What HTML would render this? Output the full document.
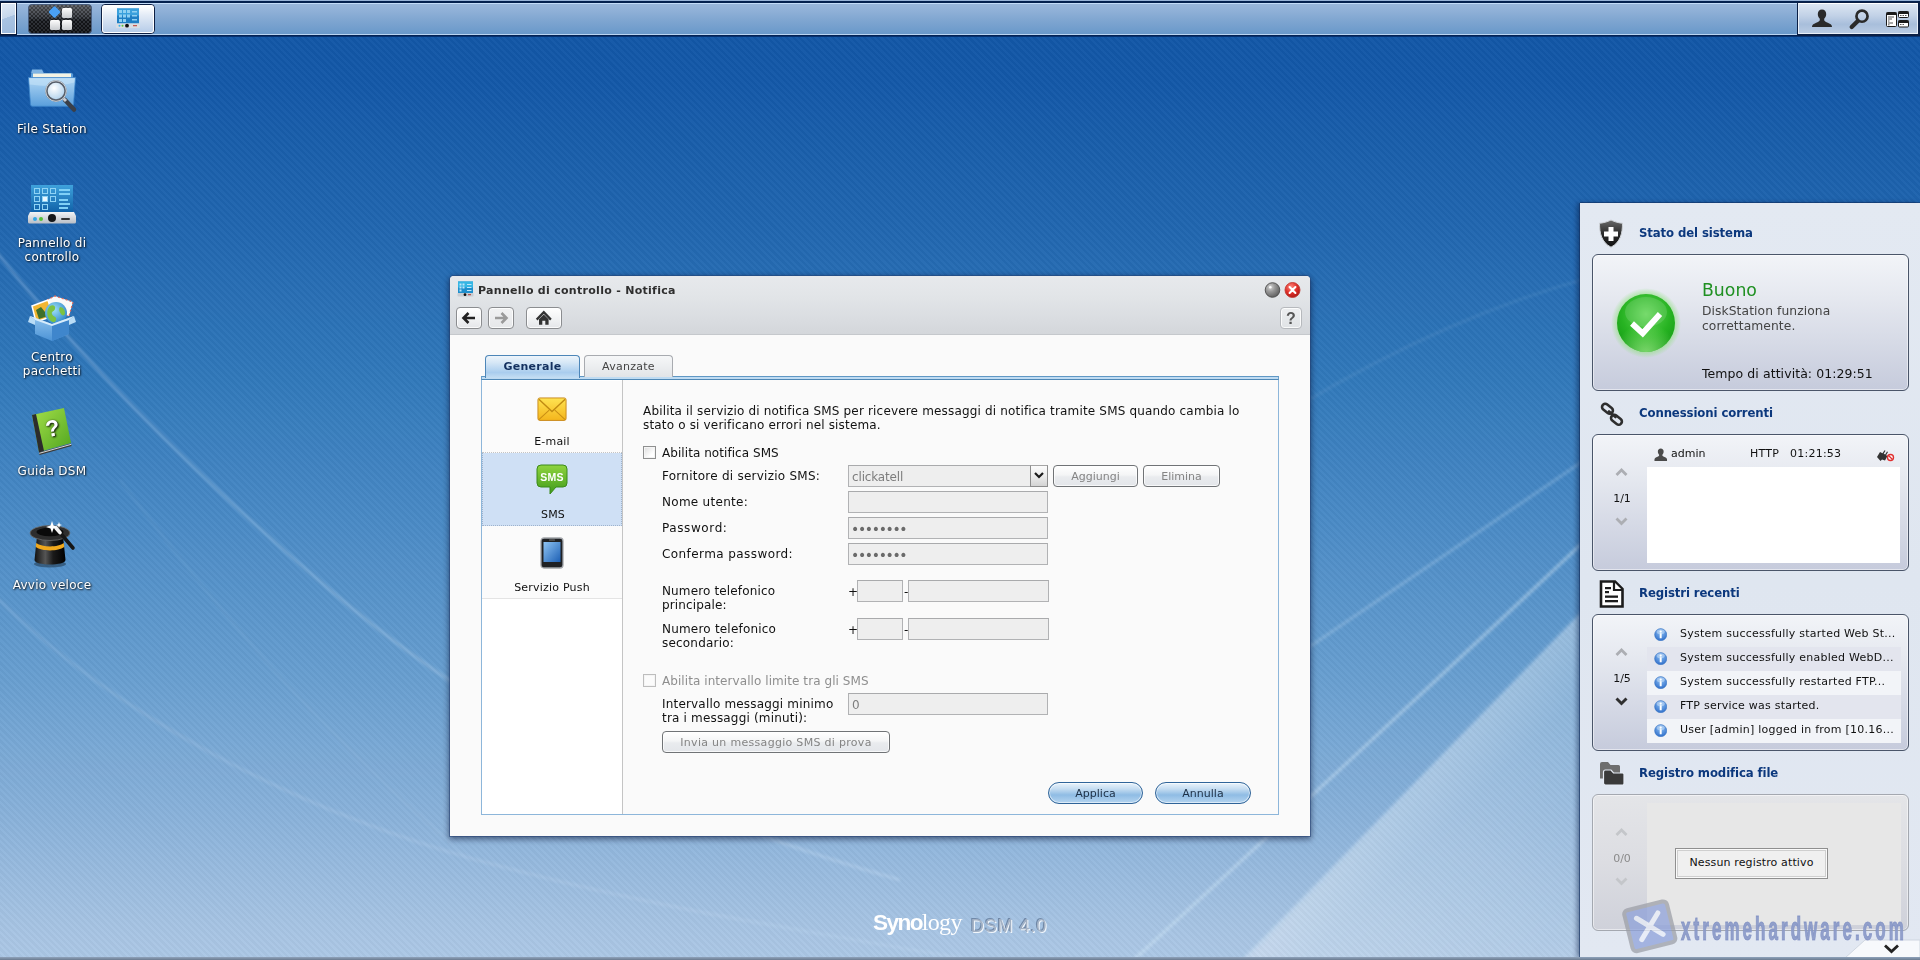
<!DOCTYPE html>
<html lang="it">
<head>
<meta charset="utf-8">
<title>Synology DiskStation - DSM 4.0</title>
<style>
*{box-sizing:border-box;margin:0;padding:0}
html,body{width:1920px;height:960px;overflow:hidden}
body{font-family:"DejaVu Sans","Liberation Sans",sans-serif;font-size:12px;color:#111;position:relative;
background:#165aa8}
#bg{position:absolute;left:0;top:0;width:1920px;height:960px;
background:linear-gradient(180deg,#1257a6 0px,#1459a8 80px,#2066b0 220px,#3279bb 380px,#4a8bc6 520px,#699fd0 680px,#8bb3db 820px,#a5c3e3 920px,#adc8e6 960px)}
#stripes{position:absolute;left:0;top:0;width:1920px;height:960px;
background:repeating-linear-gradient(45deg,rgba(255,255,255,0.022) 0,rgba(255,255,255,0.022) 2.300px,rgba(0,0,0,0.022) 2.300px,rgba(0,0,0,0.022) 4.600px)}
.abs{position:absolute}
/* taskbar */
#taskbar{position:absolute;left:0;top:0;width:1920px;height:37px;background:linear-gradient(180deg,#04214e 0,#04214e 35px,#02245a 36px,#0b3f88 37px)}
#taskbar .bar{position:absolute;left:0;top:3px;width:1920px;height:32px;
background:linear-gradient(180deg,#c3dcf8 0,#c3dcf8 1px,#98b6da 1.500px,#8fb0d7 8px,#7ea5d0 18px,#6a99ca 30.500px,#b9d4f2 31px,#b9d4f2 32px)}
#taskbar .topline{position:absolute;left:0;top:0;width:1920px;height:1px;background:#97b3d7}

/* taskbar buttons */
.tb-show{position:absolute;left:0;top:2px;width:17px;height:33px;background:#0a1a3a}
.tb-show i{position:absolute;left:1px;top:1px;width:15px;height:31px;border:1px solid #fff;background:linear-gradient(160deg,#dfe9f5 0,#c6d7ec 45%,#a9c3e2 46%,#9dbadd 100%)}
.tb-menu{position:absolute;left:28px;top:4px;width:64px;height:30px;border-radius:4px;border:1px solid #4a5f7f;background:#1c1f24;
background-image:linear-gradient(180deg,rgba(255,255,255,0.22) 0,rgba(255,255,255,0.05) 45%,rgba(0,0,0,0.2) 55%,rgba(0,0,0,0.35) 100%),
repeating-conic-gradient(#3b3f46 0 25%,#17191d 0 50%);background-size:auto,4px 4px}
.tb-task{position:absolute;left:101px;top:4px;width:54px;height:30px;border-radius:4px;border:1px solid #0c1f44;background:#fff;padding:0}
.tb-task i{display:block;width:100%;height:100%;border-radius:3px;border:1px solid #fff;background:linear-gradient(180deg,#ffffff 0,#e3ebf6 35%,#b7cde9 100%)}
.tb-right{position:absolute;left:1797px;top:2px;width:123px;height:34px;background:#0a1f45}
.tb-right i{position:absolute;left:1px;top:1px;width:120px;height:31px;border:1px solid #e8eff8;border-top-color:#fff;background:linear-gradient(180deg,#dbe5f2 0,#c2d2e7 40%,#a8bedb 70%,#b9cbe3 100%)}
/* desktop icons */
.dicon{position:absolute;width:104px;left:0;text-align:center;color:#fff;font-size:12px;letter-spacing:0.28px;line-height:14px;text-shadow:1px 1px 2px rgba(0,0,0,0.85),0 0 2px rgba(0,0,0,0.5)}
.dicon svg{display:block;margin:0 auto}
.dicon span{display:block;position:absolute;left:0;width:104px;margin-top:1px}

/* window */
#win{position:absolute;left:450px;top:276px;width:860px;height:560px;background:#fafafa;border-radius:4px 4px 0 0;
box-shadow:0 0 0 1px rgba(40,70,120,0.55),0 2px 6px 1px rgba(0,10,40,0.55)}
#win .hdr{position:absolute;left:0;top:0;width:860px;height:59px;border-radius:4px 4px 0 0;border-bottom:1px solid #c5c8cc;
background:linear-gradient(180deg,#e7e9ec 0,#e2e5e8 20px,#dadde1 42px,#d4d7db 57px)}
#win .title{position:absolute;left:28px;top:7px;font-weight:bold;font-size:11px;line-height:16px;color:#2e2e2e;letter-spacing:0.29px;white-space:nowrap}
.nbtn{position:absolute;top:31px;height:22px;border:1px solid #8b8d90;border-radius:4px;background:linear-gradient(180deg,#ffffff 0,#f4f5f6 45%,#e4e6e9 100%);box-shadow:inset 0 0 0 1px rgba(255,255,255,0.8)}
.nbtn svg{position:absolute;left:0;top:0}
.tab{position:absolute;height:22px;font-size:11px;letter-spacing:0.26px;line-height:20px;text-align:center;white-space:nowrap}
.tab.on{left:35px;top:79px;width:95px;height:23px;border:1px solid #4d86b8;border-bottom:none;border-radius:4px 4px 0 0;font-weight:bold;color:#14305e;
background:linear-gradient(180deg,#eef5fb 0,#d6e7f6 30%,#a9cdee 75%,#c4def3 100%);line-height:21px}
.tab.off{left:134px;top:79px;width:89px;height:22px;border:1px solid #a8abb0;border-bottom:none;border-radius:4px 4px 0 0;color:#444;
background:linear-gradient(180deg,#f6f7f8 0,#eceef0 50%,#e2e4e7 100%);line-height:21px}
#tabstrip{position:absolute;left:31px;top:100px;width:798px;height:4px;background:#bfdbf2;border-top:1px solid #5f97c4;border-bottom:1px solid #4f88b6;border-left:1px solid #6aa0cc;border-right:1px solid #6aa0cc}
#panel{position:absolute;left:31px;top:104px;width:798px;height:435px;border:1px solid #8db6da;border-top:none;background:#fafafa}
#lnav{position:absolute;left:0;top:0;width:141px;height:434px;background:#fff;border-right:1px solid #c4c4c4}
.litem{position:absolute;left:0;width:140px;height:73px;text-align:center;font-size:11px;letter-spacing:0.2px;border-bottom:1px dotted #c4c4c4;background:#fbfbfb}
.litem span{position:absolute;left:0;width:140px;top:54px;line-height:14px;color:#111}
.litem svg{position:absolute}
.litem.sel{background:#cfe0f5;border-bottom:1px dotted #9fb3cc;border-left:1px dotted #9fb3cc;border-right:1px dotted #9fb3cc}
.t{position:absolute;white-space:nowrap;font-size:12px;line-height:14px;color:#111;margin-top:1px}
.f{position:absolute;height:22px;border:1px solid #b1b2b4;border-top-color:#a9aaac;background:#eeeeee;font-size:12px;letter-spacing:-0.15px;line-height:20px;color:#7d7d7d;padding-left:3px;padding-top:1px;white-space:nowrap;overflow:hidden}
.gbtn{position:absolute;height:22px;border:1px solid #707376;border-radius:4px;background:linear-gradient(180deg,#ffffff 0,#f4f5f6 45%,#e9ebee 55%,#e3e6ea 100%);color:#848484;font-size:11px;line-height:22px;text-align:center;white-space:nowrap;box-shadow:inset 0 0 0 1px rgba(255,255,255,0.7)}
.bbtn{position:absolute;height:22px;border:1px solid #2f6499;border-radius:11px;color:#1c2f45;font-size:11px;line-height:22px;text-align:center;
background:linear-gradient(180deg,#eaf3fb 0,#c4dcf1 30%,#8fbce4 60%,#b5d5f0 100%);box-shadow:inset 0 0 0 1px rgba(255,255,255,0.55)}
.cb{position:absolute;width:13px;height:13px;border:1px solid #8e8f8f;background:linear-gradient(135deg,#dcdcdc 0,#ffffff 70%);box-shadow:inset 0 0 0 1px #f4f4f4}

/* widgets */
#wp{position:absolute;left:1580px;top:203px;width:340px;height:755px;background:linear-gradient(180deg,#e3e9f2 0,#dfe6f0 50%,#e2e8f2 100%);box-shadow:-1px 0 0 rgba(20,50,100,0.6),-3px 0 5px rgba(0,20,60,0.45),0 -1px 0 rgba(20,50,100,0.5)}
.wt{position:absolute;left:59px;font-weight:bold;font-stretch:condensed;font-size:13px;line-height:16px;color:#0c387d;white-space:nowrap;letter-spacing:-0.1px;margin-top:1px}
.wbox{position:absolute;left:12px;width:317px;height:137px;border:1px solid #4a5569;border-radius:6px;
background:linear-gradient(180deg,#f2f4f8 0,#e6e9f0 30%,#d6dae6 65%,#c6cbdc 100%);box-shadow:inset 0 0 0 1px rgba(255,255,255,0.500)}
.wbox .in{position:absolute;left:54px;width:254px}
.wt2{position:absolute;white-space:nowrap;font-size:11px;letter-spacing:0.24px;line-height:14px;color:#111}
.row{position:absolute;left:54px;width:254px;height:24px}
.chev{position:absolute;left:22px}
.pg{position:absolute;left:9px;width:40px;text-align:center;font-size:11px;line-height:14px;color:#111}
</style>
</head>
<body>
<div id="bg"></div>
<svg id="streaks" class="abs" style="left:0;top:0" width="1920" height="960" viewBox="0 0 1920 960">
<defs><filter id="bl1" x="-5%" y="-5%" width="110%" height="110%"><feGaussianBlur stdDeviation="1.500"/></filter><filter id="bl2" x="-5%" y="-5%" width="110%" height="110%"><feGaussianBlur stdDeviation="2.500"/></filter>
<linearGradient id="wg" gradientUnits="userSpaceOnUse" x1="1420" y1="780" x2="1560" y2="925"><stop offset="0" stop-color="#fff" stop-opacity="0.340"/><stop offset="0.250" stop-color="#fff" stop-opacity="0.220"/><stop offset="1" stop-color="#fff" stop-opacity="0.100"/></linearGradient></defs>
<path d="M1238 966L1592 602V966z" fill="url(#wg)" filter="url(#bl2)"/>
<g fill="none" stroke="#d6eafb" filter="url(#bl1)">
<path d="M-5 250C90 370 200 480 330 590S620 800 900 880" stroke-width="2.600" opacity="0.330"/>
<path d="M-5 596C120 720 300 810 470 858S800 930 1000 965" stroke-width="2.200" opacity="0.230"/>
<path d="M120 480C240 640 330 740 470 860" stroke-width="1.600" opacity="0.120"/>
<path d="M1300 405Q1450 315 1592 277" stroke-width="2" opacity="0.130"/>
<path d="M1290 660Q1450 552 1592 455" stroke-width="2.600" opacity="0.300"/>
<path d="M1592 534Q1400 715 1125 968" stroke-width="3.200" opacity="0.450"/>
<path d="M1592 604L1240 964" stroke-width="3" opacity="0.250"/>
</g>
</svg>
<div id="stripes"></div>
<div id="taskbar"><div class="topline"></div><div class="bar"></div></div>

<div class="tb-show"><i></i></div>
<div class="tb-menu">
<svg width="62" height="28" viewBox="0 0 62 28" style="position:absolute;left:-1px;top:0">
<defs><linearGradient id="gsq" x1="0" y1="0" x2="0" y2="1"><stop offset="0" stop-color="#fdfdfd"/><stop offset="1" stop-color="#c9ccd0"/></linearGradient></defs>
<rect x="22" y="2.5" width="9" height="9" rx="1.5" transform="rotate(45 26.5 7)" fill="#4aa0f4"/>
<rect x="34" y="3" width="10" height="10" rx="1.5" fill="url(#gsq)"/>
<rect x="22" y="15" width="10" height="10" rx="1.5" fill="url(#gsq)"/>
<rect x="34" y="15" width="10" height="10" rx="1.5" fill="url(#gsq)"/>
</svg></div>
<div class="tb-task"><i></i>
<svg width="24" height="22" viewBox="0 0 24 22" style="position:absolute;left:14px;top:3px">
<rect x="1" y="0.5" width="22" height="15" fill="#1f7fc4"/><rect x="1" y="0.5" width="22" height="7" fill="#3aa0dc"/>
<g fill="#8fd0f2"><rect x="3" y="2" width="3" height="3"/><rect x="7" y="2" width="3" height="3"/><rect x="11" y="2" width="3" height="3"/><rect x="3" y="6.500" width="3" height="3"/><rect x="7" y="6.500" width="3" height="3"/><rect x="11" y="6.500" width="3" height="3"/><rect x="3" y="11" width="3" height="3"/><rect x="7" y="11" width="3" height="3"/><rect x="16" y="3" width="5" height="1.500"/><rect x="16" y="7" width="5" height="1.500"/><rect x="16" y="11" width="5" height="1.500"/></g>
<rect x="0" y="15.500" width="24" height="4.500" rx="1" fill="#d9dde2"/><circle cx="11" cy="17.700" r="1.900" fill="#111"/><circle cx="3.500" cy="17.700" r="1" fill="#3bb0e8"/><circle cx="6.500" cy="17.700" r="1" fill="#58c23a"/><rect x="17" y="17.200" width="4" height="1" fill="#c0392b"/>
</svg></div>
<div class="tb-right"><i></i>
<svg width="120" height="31" viewBox="0 0 120 31" style="position:absolute;left:1px;top:1px">
<g fill="#2a2a2a">
<path d="M24 6.500c2.600 0 4.200 2 4.200 4.600 0 1.900-.8 3.600-2 4.600v1.600c0 1.200 3 2.200 5.500 3.400 1.500.7 2.300 1.800 2.300 3.200H14c0-1.400.8-2.500 2.300-3.200 2.500-1.200 5.500-2.200 5.500-3.400v-1.600c-1.200-1-2-2.700-2-4.600 0-2.600 1.600-4.600 4.200-4.600z"/>
<path d="M64 6.300a6.900 6.900 0 1 0 0 13.800 6.900 6.900 0 0 0 0-13.800zm0 2.700a4.200 4.200 0 1 1 0 8.400 4.200 4.200 0 0 1 0-8.400z"/>
<path d="M58.600 16.200l3 3-6.400 6.200a2 2 0 0 1-3-3z"/>
</g>
<g>
<rect x="88.500" y="9.500" width="10" height="14" rx="1" fill="#fff" stroke="#1a1a1a"/><rect x="88.500" y="9.500" width="10" height="2.500" fill="#1a1a1a"/>
<rect x="100.500" y="8.500" width="10" height="6" rx="1" fill="#fff" stroke="#1a1a1a"/><rect x="100.500" y="8.500" width="10" height="2.500" fill="#1a1a1a"/>
<rect x="100.500" y="17.500" width="10" height="6.500" rx="1" fill="#fff" stroke="#1a1a1a"/><rect x="100.500" y="17.500" width="10" height="2.500" fill="#1a1a1a"/>
<g fill="#555"><rect x="90" y="13.500" width="6" height="1"/><rect x="90" y="15.500" width="4" height="1"/><rect x="90" y="17.500" width="1.500" height="1"/><rect x="90" y="19.500" width="5" height="1"/><rect x="90" y="21.300" width="1.500" height="1"/><rect x="102" y="12" width="1.500" height="1"/><rect x="104.500" y="12" width="1.500" height="1"/><rect x="107" y="12" width="1.500" height="1"/><rect x="102" y="21" width="1.500" height="1"/><rect x="104.500" y="21" width="1.500" height="1"/></g>
</g>
</svg></div>

<div class="dicon" style="top:64px;height:80px">
<svg width="52" height="50" viewBox="0 0 52 50">
<defs>
<linearGradient id="fs1" x1="0" y1="0" x2="0" y2="1"><stop offset="0" stop-color="#b3d8f5"/><stop offset="1" stop-color="#5a9fdc"/></linearGradient>
<radialGradient id="fs2" cx="0.4" cy="0.35" r="0.7"><stop offset="0" stop-color="#ffffff"/><stop offset="1" stop-color="#a9cdea"/></radialGradient>
</defs>
<path d="M6 5.500h10l2 4h-13z" fill="#7fb4e4"/>
<rect x="5" y="9" width="42" height="8" rx="1.500" fill="#5c9fdb"/>
<path d="M7 9.500h38v6h-38z" fill="#f4f3e4"/>
<path d="M2.500 13.500h47l-2 27a2 2 0 0 1-2 1.800h-39a2 2 0 0 1-2-1.800z" fill="url(#fs1)" stroke="#3d86cb" stroke-width="0.8"/>
<path d="M3.500 14.500h45l-.3 4c-14 4-30 4-44.500 2z" fill="#c4e2f8" opacity="0.6"/>
<path d="M39 36l9 9.500" stroke="#3a3f48" stroke-width="4.500" stroke-linecap="round"/>
<path d="M36 33l4 4" stroke="#c8ccd2" stroke-width="3"/>
<circle cx="30" cy="27" r="9.500" fill="url(#fs2)" stroke="#59606b" stroke-width="2.400"/>
<circle cx="30" cy="27" r="10.300" fill="none" stroke="#e8edf2" stroke-width="0.8"/>
</svg>
<span style="top:57px">File Station</span></div>

<div class="dicon" style="top:182px;height:90px">
<svg width="50" height="42" viewBox="0 0 50 42" style="margin-top:2px">
<defs><linearGradient id="cp1" x1="0" y1="0" x2="0" y2="1"><stop offset="0" stop-color="#3fa2dc"/><stop offset="1" stop-color="#0e5fa6"/></linearGradient>
<linearGradient id="cp2" x1="0" y1="0" x2="0" y2="1"><stop offset="0" stop-color="#f3f4f6"/><stop offset="1" stop-color="#b9bec6"/></linearGradient></defs>
<rect x="4" y="1" width="42" height="28" fill="url(#cp1)"/>
<g fill="none" stroke="#8fd3f5" stroke-width="1"><rect x="7.500" y="4.500" width="5" height="5"/><rect x="15.500" y="4.500" width="5" height="5"/><rect x="23.500" y="4.500" width="5" height="5"/><rect x="7.500" y="12.500" width="5" height="5"/><rect x="15.500" y="12.500" width="5" height="5" fill="#e8f6ff"/><rect x="23.500" y="12.500" width="5" height="5"/><rect x="7.500" y="20.500" width="5" height="5"/><rect x="15.500" y="20.500" width="5" height="5"/></g>
<g fill="#7fd0f6"><rect x="32" y="5" width="11" height="2"/><rect x="32" y="9" width="11" height="2"/><rect x="32" y="15" width="9" height="2"/><rect x="32" y="19" width="11" height="2"/><rect x="32" y="23" width="9" height="2"/></g>
<path d="M3 28h44l2 4v6a1.500 1.500 0 0 1-1.500 1.500h-45a1.500 1.500 0 0 1-1.500-1.500v-6z" fill="url(#cp2)"/>
<circle cx="25" cy="34" r="4" fill="#15171a"/><circle cx="8" cy="35" r="2" fill="#35a6e4"/><circle cx="14" cy="35" r="2" fill="#55c13a"/><rect x="34" y="34" width="9" height="2" rx="1" fill="#333"/>
</svg>
<span style="top:53px">Pannello di<br>controllo</span></div>

<div class="dicon" style="top:294px;height:90px">
<svg width="50" height="48" viewBox="0 0 50 48">
<defs><linearGradient id="pk1" x1="0" y1="0" x2="0" y2="1"><stop offset="0" stop-color="#8fc3ee"/><stop offset="1" stop-color="#4c93d6"/></linearGradient>
<radialGradient id="pk2" cx="0.4" cy="0.35" r="0.7"><stop offset="0" stop-color="#9fe0f7"/><stop offset="1" stop-color="#2a84c9"/></radialGradient></defs>
<path d="M20 6l8-4 18 6-4 14-20-4z" fill="#fafafa" stroke="#e26a5a" stroke-width="1.200" stroke-dasharray="2 2"/>
<path d="M5 12l16-6 5 16-17 6z" fill="#f2b632" stroke="#fff" stroke-width="1.500"/>
<path d="M9 16l5-3 4 5 3-2 3 5-12 4z" fill="#3f6f2a"/>
<circle cx="29" cy="19" r="11" fill="url(#pk2)"/>
<path d="M23 12c3-2 6 0 5 3s-4 2-3 5 5 2 4 6-5 2-7-1-3-9 1-13zM33 13c3 0 5 3 5 6s-3 3-4 1-3-4-1-7z" fill="#7cc243"/>
<path d="M3 22l22 8 22-8-5 4v14l-17 7-17-7v-14z" fill="url(#pk1)"/>
<path d="M25 30v17l17-7v-14z" fill="#3f86cc"/>
<path d="M3 22l5 4 17 6v-2zM47 22l-5 4-17 6v-2z" fill="#d8ecfb"/>
<path d="M3 22l-2 6 7 3v-5zM47 22l2 6-7 3v-5z" fill="#b9dcf6"/>
</svg>
<span style="top:55px">Centro<br>pacchetti</span></div>

<div class="dicon" style="top:406px;height:90px">
<svg width="46" height="50" viewBox="0 0 46 50">
<defs><linearGradient id="hb1" x1="0" y1="0" x2="1" y2="1"><stop offset="0" stop-color="#a6e04a"/><stop offset="1" stop-color="#4fa51f"/></linearGradient></defs>
<path d="M3 9l32-7 7 35-32 9z" fill="url(#hb1)"/>
<path d="M3 9l4-.9 8 37-5 1.400z" fill="#2c2c2c"/>
<path d="M10 46.500l32-9 .6 2.500-32 9z" fill="#3a3a3a"/>
<path d="M10.300 47.300l32-9" stroke="#e9e9e9" stroke-width="0.900"/>
<text x="24" y="30" font-family="Liberation Sans,sans-serif" font-weight="bold" font-size="23" fill="#fff" text-anchor="middle" transform="rotate(-10 25 24)">?</text>
</svg>
<span style="top:57px">Guida DSM</span></div>

<div class="dicon" style="top:520px;height:90px">
<svg width="52" height="48" viewBox="0 0 52 48">
<defs><linearGradient id="ht1" x1="0" y1="0" x2="1" y2="0"><stop offset="0" stop-color="#111"/><stop offset="0.350" stop-color="#555"/><stop offset="0.600" stop-color="#1a1a1a"/><stop offset="1" stop-color="#000"/></linearGradient></defs>
<ellipse cx="24" cy="44" rx="16" ry="3.500" fill="rgba(0,0,0,0.350)"/>
<path d="M11 16l-2.500 24c0 6 31 6 31 0l-2.500-24z" fill="url(#ht1)"/>
<path d="M10.200 23c6 4.500 22 4.500 27.600 0l.4 4c-6 4.500-22.400 4.500-28.400 0z" fill="#f0a81c"/>
<ellipse cx="24" cy="13" rx="20" ry="7.500" fill="#2d2d2d"/>
<ellipse cx="24" cy="12" rx="13.500" ry="4.200" fill="#0a0a0a"/>
<ellipse cx="24" cy="13" rx="20" ry="7.500" fill="none" stroke="#6a6a6a" stroke-width="0.800"/>
<path d="M30 8l17 20" stroke="#161616" stroke-width="3.600" stroke-linecap="round"/>
<path d="M30 8l4 4.700" stroke="#f4f4f4" stroke-width="3.600" stroke-linecap="round"/>
<path d="M26 1l1.500 4.500 4.500 1.500-4.500 1.500-1.500 4.500-1.500-4.500-4.500-1.500 4.500-1.500z" fill="#fff"/>
<path d="M33 2l.8 2.200 2.200.8-2.200.8-.8 2.200-.8-2.200-2.200-.8 2.200-.8z" fill="#fff"/>
</svg>
<span style="top:57px">Avvio veloce</span></div>

<div id="win">
<div class="hdr"></div>
<svg class="abs" style="left:7px;top:5px" width="17" height="17" viewBox="0 0 17 17">
<rect x="1" y="0.500" width="15" height="11.500" fill="#1f8fcd"/><rect x="1" y="0.500" width="15" height="6" fill="#35b6e4"/>
<g fill="#bfe6fa"><rect x="2.500" y="2.500" width="2" height="2"/><rect x="5.500" y="2.500" width="2" height="2"/><rect x="2.500" y="5.500" width="2" height="2"/><rect x="5.500" y="5.500" width="2" height="2"/><rect x="2.500" y="8.500" width="2" height="2"/><rect x="10" y="3" width="4.500" height="1"/><rect x="10" y="6" width="4.500" height="1"/><rect x="10" y="9" width="4.500" height="1"/></g>
<rect x="0.500" y="12" width="16" height="3.500" rx="0.800" fill="#c9cdd3"/><circle cx="8" cy="13.700" r="1.400" fill="#111"/><rect x="11" y="13.200" width="3" height="1" fill="#b03a2e"/>
</svg>
<div class="title">Pannello di controllo - Notifica</div>
<svg class="abs" style="left:813px;top:5px" width="40" height="18" viewBox="0 0 40 18">
<defs><radialGradient id="wb1" cx="0.35" cy="0.3" r="0.8"><stop offset="0" stop-color="#d5d5d5"/><stop offset="0.400" stop-color="#989898"/><stop offset="1" stop-color="#565656"/></radialGradient>
<radialGradient id="wb2" cx="0.4" cy="0.3" r="0.8"><stop offset="0" stop-color="#ff8a80"/><stop offset="0.5" stop-color="#e0302a"/><stop offset="1" stop-color="#9e1410"/></radialGradient></defs>
<circle cx="9.500" cy="9" r="7.300" fill="url(#wb1)" stroke="#4c4c4c" stroke-width="0.900"/><circle cx="7.300" cy="6.300" r="1.300" fill="#fff" opacity="0.900"/>
<circle cx="29.500" cy="9" r="7.500" fill="url(#wb2)" stroke="#c23a33" stroke-width="0.900"/>
<path d="M26.600 6.100l5.800 5.800M32.400 6.100l-5.800 5.800" stroke="#fff" stroke-width="2.100" stroke-linecap="round"/>
</svg>
<div class="nbtn" style="left:6px;width:26px"><svg width="24" height="20" viewBox="0 0 24 20"><path d="M18 10h-11M11.500 5l-5 5 5 5" fill="none" stroke="#222" stroke-width="2.600" stroke-linejoin="miter"/></svg></div>
<div class="nbtn" style="left:38px;width:26px;background:linear-gradient(180deg,#f1f2f3 0,#e6e8ea 100%)"><svg width="24" height="20" viewBox="0 0 24 20"><path d="M6 10h11M12.500 5l5 5-5 5" fill="none" stroke="#9a9a9a" stroke-width="2.600"/></svg></div>
<div class="nbtn" style="left:76px;width:36px"><svg width="34" height="20" viewBox="0 0 34 20"><path d="M9.700 11.600l7.100-7.400 7.100 7.400" fill="none" stroke="#333" stroke-width="2.300" stroke-linejoin="miter"/><path d="M12 11.300l4.800-4.900 4.800 4.900v5.500h-3.300v-4h-3v4h-3.300z" fill="#333"/></svg></div>
<div class="nbtn" style="left:830px;width:22px;border-color:#b6b9bd;background:linear-gradient(180deg,#eceef0 0,#e0e3e6 100%)"><span style="position:absolute;left:0;top:0;width:20px;text-align:center;font-family:'Liberation Sans',sans-serif;font-weight:bold;font-size:16px;line-height:21px;color:#555">?</span></div>

<div id="tabstrip"></div>
<div class="tab on">Generale</div>
<div class="tab off">Avanzate</div>
<div id="panel">
<div id="lnav">
 <div class="litem" style="top:1px;height:72px">
  <svg style="left:55px;top:16px" width="30" height="24.400" viewBox="0 0 32 26"><defs><linearGradient id="em1" x1="0" y1="0" x2="0" y2="1"><stop offset="0" stop-color="#ffe352"/><stop offset="1" stop-color="#f4b51c"/></linearGradient></defs>
  <rect x="1" y="1" width="30" height="24" rx="2" fill="url(#em1)" stroke="#c9871a" stroke-width="1"/><path d="M2 24l11-10M30 24l-11-10" stroke="#c98f14" stroke-width="1.100"/><path d="M2 2.500l14 13 14-13" fill="none" stroke="#c08a12" stroke-width="1.500"/></svg>
  <span>E-mail</span></div>
 <div class="litem sel" style="top:73px;height:73px">
  <svg style="left:53px;top:11px" width="32" height="32" viewBox="0 0 32 32"><defs><linearGradient id="sm1" x1="0" y1="0" x2="0" y2="1"><stop offset="0" stop-color="#8fd43f"/><stop offset="1" stop-color="#3f9a1a"/></linearGradient></defs>
  <path d="M5 1h22a4 4 0 0 1 4 4v14a4 4 0 0 1-4 4h-7l-6 7v-7h-9a4 4 0 0 1-4-4v-14a4 4 0 0 1 4-4z" fill="url(#sm1)" stroke="#3b8a1a" stroke-width="1"/>
  <text x="16" y="16.500" text-anchor="middle" font-family="Liberation Sans,sans-serif" font-weight="bold" font-size="10.500" fill="#fff">SMS</text></svg>
  <span style="top:55px">SMS</span></div>
 <div class="litem" style="top:146px;border-bottom:1px solid #e4e4e4">
  <svg style="left:58px;top:11px" width="24" height="32" viewBox="0 0 24 32"><defs><linearGradient id="ph1" x1="0" y1="0" x2="1" y2="1"><stop offset="0" stop-color="#8ec4f4"/><stop offset="1" stop-color="#1c5fb4"/></linearGradient></defs>
  <rect x="1" y="1" width="22" height="30" rx="3" fill="#1f2124" stroke="#a3a6ab" stroke-width="1.300"/><rect x="3.500" y="5" width="17" height="20" fill="url(#ph1)"/><rect x="9" y="2.600" width="6" height="1" rx="0.500" fill="#777"/></svg>
  <span style="top:55px">Servizio Push</span></div>
</div>
</div>

<div class="t" style="left:193px;top:127px;white-space:normal;width:620px;letter-spacing:0.17px">Abilita il servizio di notifica SMS per ricevere messaggi di notifica tramite SMS quando cambia lo<br>stato o si verificano errori nel sistema.</div>
<div class="cb" style="left:193px;top:170px"></div>
<div class="t" style="left:212px;top:169px;letter-spacing:0.06px">Abilita notifica SMS</div>
<div class="t" style="left:212px;top:192px;letter-spacing:0.25px">Fornitore di servizio SMS:</div>
<div class="f" style="left:398px;top:189px;width:200px">clickatell</div>
<div class="abs" style="left:580px;top:189px;width:18px;height:22px;border:1px solid #8d8d8d;border-top-color:#a5a5a5;background:linear-gradient(180deg,#fbfbfb 0,#ececec 50%,#d4d4d4 100%)"><svg width="16" height="20" viewBox="0 0 16 20" style="display:block"><path d="M4 7l4 4 4-4" fill="none" stroke="#1a1a1a" stroke-width="2.200"/></svg></div>
<div class="gbtn" style="left:603px;top:189px;width:85px">Aggiungi</div>
<div class="gbtn" style="left:693px;top:189px;width:77px">Elimina</div>
<div class="t" style="left:212px;top:218px;letter-spacing:0.28px">Nome utente:</div>
<div class="f" style="left:398px;top:215px;width:200px"></div>
<div class="t" style="left:212px;top:244px;letter-spacing:0.6px">Password:</div>
<div class="f" style="left:398px;top:241px;width:200px;font-size:14px;letter-spacing:-1.350px;padding-left:2px;padding-top:1px;color:#6a6a6a;line-height:20px">••••••••</div>
<div class="t" style="left:212px;top:270px;letter-spacing:0.42px">Conferma password:</div>
<div class="f" style="left:398px;top:267px;width:200px;font-size:14px;letter-spacing:-1.350px;padding-left:2px;padding-top:1px;color:#6a6a6a;line-height:20px">••••••••</div>
<div class="t" style="left:212px;top:307px;white-space:normal;width:150px;letter-spacing:0.14px">Numero telefonico principale:</div>
<div class="t" style="left:398px;top:308px">+</div>
<div class="f" style="left:407px;top:304px;width:46px"></div>
<div class="t" style="left:454px;top:308px">-</div>
<div class="f" style="left:458px;top:304px;width:141px"></div>
<div class="t" style="left:212px;top:345px;white-space:normal;width:150px;letter-spacing:0.2px">Numero telefonico secondario:</div>
<div class="t" style="left:398px;top:346px">+</div>
<div class="f" style="left:407px;top:342px;width:46px"></div>
<div class="t" style="left:454px;top:346px">-</div>
<div class="f" style="left:458px;top:342px;width:141px"></div>
<div class="cb" style="left:193px;top:398px;border-color:#bdbdbd;background:#fbfbfb"></div>
<div class="t" style="left:212px;top:397px;color:#8e8e8e;letter-spacing:0.07px">Abilita intervallo limite tra gli SMS</div>
<div class="t" style="left:212px;top:420px;white-space:normal;width:180px;letter-spacing:0.18px">Intervallo messaggi minimo<br>tra i messaggi (minuti):</div>
<div class="f" style="left:398px;top:417px;width:200px">0</div>
<div class="gbtn" style="left:212px;top:455px;width:228px;letter-spacing:0.3px">Invia un messaggio SMS di prova</div>
<div class="bbtn" style="left:598px;top:506px;width:95px">Applica</div>
<div class="bbtn" style="left:705px;top:506px;width:96px">Annulla</div>
</div>

<div id="wp">
<svg width="0" height="0" style="position:absolute"><defs><radialGradient id="inf" cx="0.5" cy="0.3" r="0.8"><stop offset="0" stop-color="#8cc0f5"/><stop offset="1" stop-color="#2363c4"/></radialGradient></defs></svg>
<svg class="abs" style="left:18px;top:16px" width="26" height="29" viewBox="0 0 26 29">
<defs><linearGradient id="sh1" x1="0" y1="0" x2="0" y2="1"><stop offset="0" stop-color="#6a6a6a"/><stop offset="0.5" stop-color="#2b2b2b"/><stop offset="1" stop-color="#111"/></linearGradient></defs>
<path d="M13 1c4 2 8 3 11.500 3.200 0 10-2 19-11.500 24-9.500-5-11.500-14-11.500-24 3.500-.2 7.500-1.200 11.500-3.200z" fill="url(#sh1)" stroke="#cfd3d8" stroke-width="1"/>
<path d="M10.500 8h5v4.500h4.500v5h-4.500v4.500h-5v-4.500h-4.500v-5h4.500z" fill="#fff"/></svg>
<div class="wt" style="top:21px">Stato del sistema</div>
<div class="wbox" style="top:51px">
 <svg class="abs" style="left:18px;top:33px" width="70" height="70" viewBox="0 0 70 70">
 <defs><radialGradient id="ok1" cx="0.5" cy="0.35" r="0.7"><stop offset="0" stop-color="#63d657"/><stop offset="0.6" stop-color="#27b322"/><stop offset="1" stop-color="#139a14"/></radialGradient>
 <radialGradient id="ok3" cx="0.5" cy="1.050" r="0.550"><stop offset="0" stop-color="#a5ee8f" stop-opacity="0.750"/><stop offset="1" stop-color="#a5ee8f" stop-opacity="0"/></radialGradient><radialGradient id="ok2" cx="0.5" cy="0.5" r="0.5"><stop offset="0.820" stop-color="#8fe07f" stop-opacity="0.600"/><stop offset="1" stop-color="#8fe07f" stop-opacity="0"/></radialGradient></defs>
 <circle cx="35" cy="35" r="35" fill="url(#ok2)"/>
 <circle cx="35" cy="35" r="29" fill="url(#ok1)"/>
 <ellipse cx="35" cy="24" rx="21" ry="15" fill="#fff" opacity="0.130"/><circle cx="35" cy="35" r="29" fill="url(#ok3)"/>
 <path d="M21 35.500l10.700 9.800 17.300-19.300" fill="none" stroke="#fff" stroke-width="5.800"/></svg>
 <div class="wt2" style="left:109px;top:24px;font-size:17.300px;letter-spacing:0;line-height:22px;color:#1f9022">Buono</div>
 <div class="wt2" style="left:109px;top:49px;color:#444;font-size:12.300px;letter-spacing:0.08px;line-height:14.500px">DiskStation funziona<br>correttamente.</div>
 <div class="wt2" style="left:109px;top:112px;font-size:12.500px;letter-spacing:0.07px">Tempo di attività: 01:29:51</div>
</div>

<svg class="abs" style="left:19px;top:199px" width="26" height="25" viewBox="0 0 26 25">
<g fill="none" stroke="#2e2e2e" stroke-width="2.600"><rect x="2.500" y="3.500" width="12" height="6.500" rx="3.200" transform="rotate(38 8.500 6.700)"/><rect x="11.500" y="14.500" width="12" height="6.500" rx="3.200" transform="rotate(38 17.500 17.700)"/></g>
<path d="M10 9.500l6.500 5.500" stroke="#2e2e2e" stroke-width="2.600" stroke-linecap="round"/></svg>
<div class="wt" style="top:201px">Connessioni correnti</div>
<div class="wbox" style="top:231px">
 <div class="abs" style="left:54px;top:32px;width:253px;height:96px;background:#fff"></div>
 <svg class="abs" style="left:61px;top:13px" width="13.500" height="13.500" viewBox="0 0 14 14"><path d="M7 .5c1.900 0 3 1.400 3 3.200 0 1.300-.5 2.500-1.300 3.200v.9c0 .8 1.800 1.300 3.400 2 1 .5 1.400 1.300 1.400 2.200v1.500h-13v-1.500c0-.9.400-1.700 1.400-2.200 1.600-.7 3.400-1.200 3.400-2v-.9c-.8-.7-1.300-1.900-1.300-3.200 0-1.800 1.100-3.200 3-3.200z" fill="#4a4a4a"/></svg>
 <div class="wt2" style="left:78px;top:12px;letter-spacing:0">admin</div>
 <div class="wt2" style="left:157px;top:12px">HTTP</div>
 <div class="wt2" style="left:197px;top:12px">01:21:53</div>
 <svg class="abs" style="left:283px;top:13px" width="19" height="14" viewBox="0 0 19 14"><path d="M1 9l3-5 2.500 1.200 2-3 1 .5-1.800 3 1.500.8 1.800-3 1 .5-1.900 3.200 1.400.8-2.500 4.500-3-1-1.500 1.500z" fill="#333"/><circle cx="14.500" cy="9.500" r="3" fill="#fff" stroke="#e03030" stroke-width="1.400"/><path d="M12.500 7.500l4 4" stroke="#e03030" stroke-width="1.300"/></svg>
 <svg class="chev" style="top:32px" width="13" height="10" viewBox="0 0 13 10"><path d="M1.500 8l5-5 5 5" fill="none" stroke="#acaeb3" stroke-width="2.800"/></svg>
 <div class="pg" style="top:57px">1/1</div>
 <svg class="chev" style="top:81px" width="13" height="10" viewBox="0 0 13 10"><path d="M1.500 2.500l5 5 5-5" fill="none" stroke="#acaeb3" stroke-width="2.800"/></svg>
</div>

<svg class="abs" style="left:19px;top:377px" width="25" height="28" viewBox="0 0 25 28">
<path d="M2 1.500h14l7.500 7.500v17.500h-21.500z" fill="#fff" stroke="#1c1c1c" stroke-width="2.600"/><path d="M15 2v8h8" fill="#fff" stroke="#1c1c1c" stroke-width="2.200"/>
<g fill="#1c1c1c"><rect x="6" y="7" width="6" height="2.200"/><rect x="6" y="11" width="4" height="2.200"/><rect x="6" y="15.500" width="13" height="2.300"/><rect x="6" y="20" width="13" height="2.300"/></g></svg>
<div class="wt" style="top:381px">Registri recenti</div>
<div class="wbox" style="top:411px">
 <div class="row" style="top:8px;background:transparent"><svg class="abs" style="left:7px;top:5px" width="13.400" height="13.400" viewBox="0 0 15 15"><circle cx="7.500" cy="7.500" r="6.800" fill="url(#inf)" stroke="#2f6fc0" stroke-width="0.600"/><ellipse cx="7.500" cy="4.300" rx="4.600" ry="2.800" fill="#fff" opacity="0.350"/><circle cx="7.500" cy="4" r="1.200" fill="#fff"/><rect x="6.400" y="6" width="2.200" height="5.500" rx="0.400" fill="#fff"/></svg><div class="wt2" style="left:33px;top:4px">System successfully started Web St...</div></div>
<div class="row" style="top:32px;background:#e3e5ee"><svg class="abs" style="left:7px;top:5px" width="13.400" height="13.400" viewBox="0 0 15 15"><circle cx="7.500" cy="7.500" r="6.800" fill="url(#inf)" stroke="#2f6fc0" stroke-width="0.600"/><ellipse cx="7.500" cy="4.300" rx="4.600" ry="2.800" fill="#fff" opacity="0.350"/><circle cx="7.500" cy="4" r="1.200" fill="#fff"/><rect x="6.400" y="6" width="2.200" height="5.500" rx="0.400" fill="#fff"/></svg><div class="wt2" style="left:33px;top:4px">System successfully enabled WebD...</div></div>
<div class="row" style="top:56px;background:#f2f4f8"><svg class="abs" style="left:7px;top:5px" width="13.400" height="13.400" viewBox="0 0 15 15"><circle cx="7.500" cy="7.500" r="6.800" fill="url(#inf)" stroke="#2f6fc0" stroke-width="0.600"/><ellipse cx="7.500" cy="4.300" rx="4.600" ry="2.800" fill="#fff" opacity="0.350"/><circle cx="7.500" cy="4" r="1.200" fill="#fff"/><rect x="6.400" y="6" width="2.200" height="5.500" rx="0.400" fill="#fff"/></svg><div class="wt2" style="left:33px;top:4px">System successfully restarted FTP...</div></div>
<div class="row" style="top:80px;background:#e3e5ee"><svg class="abs" style="left:7px;top:5px" width="13.400" height="13.400" viewBox="0 0 15 15"><circle cx="7.500" cy="7.500" r="6.800" fill="url(#inf)" stroke="#2f6fc0" stroke-width="0.600"/><ellipse cx="7.500" cy="4.300" rx="4.600" ry="2.800" fill="#fff" opacity="0.350"/><circle cx="7.500" cy="4" r="1.200" fill="#fff"/><rect x="6.400" y="6" width="2.200" height="5.500" rx="0.400" fill="#fff"/></svg><div class="wt2" style="left:33px;top:4px">FTP service was started.</div></div>
<div class="row" style="top:104px;background:#f2f4f8"><svg class="abs" style="left:7px;top:5px" width="13.400" height="13.400" viewBox="0 0 15 15"><circle cx="7.500" cy="7.500" r="6.800" fill="url(#inf)" stroke="#2f6fc0" stroke-width="0.600"/><ellipse cx="7.500" cy="4.300" rx="4.600" ry="2.800" fill="#fff" opacity="0.350"/><circle cx="7.500" cy="4" r="1.200" fill="#fff"/><rect x="6.400" y="6" width="2.200" height="5.500" rx="0.400" fill="#fff"/></svg><div class="wt2" style="left:33px;top:4px">User [admin] logged in from [10.16...</div></div>

 <svg class="chev" style="top:32px" width="13" height="10" viewBox="0 0 13 10"><path d="M1.500 8l5-5 5 5" fill="none" stroke="#acaeb3" stroke-width="2.800"/></svg>
 <div class="pg" style="top:57px">1/5</div>
 <svg class="chev" style="top:81px" width="13" height="10" viewBox="0 0 13 10"><path d="M1.500 2.500l5 5 5-5" fill="none" stroke="#2f2f2f" stroke-width="2.900"/></svg>
</div>

<svg class="abs" style="left:19px;top:558px" width="26" height="25" viewBox="0 0 26 25">
<path d="M1 3a2 2 0 0 1 2-2h6l2.500 3h8a1.500 1.500 0 0 1 1.500 1.500v12h-20z" fill="#6e6e6e"/>
<path d="M4.500 11a2 2 0 0 1 2-2h5.500l2.500 3h9a1.500 1.500 0 0 1 1.500 1.500v9a1.500 1.500 0 0 1-1.500 1.500h-17a2 2 0 0 1-2-2z" fill="#3a3a3a" stroke="#e6ecf5" stroke-width="1.200"/></svg>
<div class="wt" style="top:561px">Registro modifica file</div>
<div class="wbox" style="top:591px;border-color:#a4a8b0;background:linear-gradient(180deg,#e4e5e8 0,#dcdde2 50%,#cfd1da 100%)">
 <div class="abs" style="left:54px;top:8px;width:254px;height:122px;background:#e7e7e7"></div>
 <div class="abs" style="left:82px;top:53px;width:153px;height:31px;border:1px solid #8f8f8f;background:#f0f0f0;box-shadow:inset 0 0 0 1px #fafafa,inset 0 0 0 2px #cfcfcf"></div>
 <div class="wt2" style="left:82px;top:61px;width:153px;text-align:center;font-size:11px;letter-spacing:0.13px">Nessun registro attivo</div>
 <svg class="chev" style="top:32px" width="13" height="10" viewBox="0 0 13 10"><path d="M1.500 8l5-5 5 5" fill="none" stroke="#c4c6ca" stroke-width="2.800"/></svg>
 <div class="pg" style="top:57px;color:#8a8a8a">0/0</div>
 <svg class="chev" style="top:81px" width="13" height="10" viewBox="0 0 13 10"><path d="M1.500 2.500l5 5 5-5" fill="none" stroke="#c4c6ca" stroke-width="2.800"/></svg>
</div>
<svg class="abs" style="left:265px;top:735px" width="75" height="20" viewBox="0 0 75 20"><path d="M0 20l20-18h55v18z" fill="#f7f9fc" stroke="#cfd6e0" stroke-width="1"/><path d="M40 7.500l6.500 6 6.500-6" fill="none" stroke="#222" stroke-width="2.800"/></svg>
</div>
<div class="abs" style="left:0;top:957px;width:1920px;height:3px;background:linear-gradient(180deg,#8fa3bb 0,#6b7b90 100%)"></div>

<div class="abs" style="left:873px;top:908px;white-space:nowrap;color:#fff;line-height:28px;height:28px">
<span style="font-family:'Liberation Sans',sans-serif;font-weight:bold;font-size:22.600px;letter-spacing:-1.600px">Syno</span><span style="font-family:'Liberation Serif',serif;font-size:24px;letter-spacing:-0.700px">logy</span><span style="font-family:'Liberation Sans',sans-serif;font-size:18.200px;letter-spacing:0.800px;color:#a3b1c4;text-shadow:1px 1px 0 rgba(255,255,255,0.850),-1px -1px 0 rgba(70,90,120,0.550);margin-left:9px;position:relative;top:1.500px">DSM 4.0</span>
</div>
<div class="abs" style="left:1619px;top:899px;width:64px;height:56px">
<svg width="64" height="56" viewBox="0 0 64 56"><g transform="rotate(-14 32 28)" opacity="0.720"><rect x="9" y="6" width="44" height="42" rx="4" fill="#8b9fd8" stroke="#9a9da6" stroke-width="4"/><path d="M20 16l22 22M42 16l-22 22" stroke="#e9edf8" stroke-width="5" stroke-linecap="round"/></g></svg></div>
<div class="abs" style="left:1681px;top:915px;width:226px;height:30px;-webkit-text-stroke:0.600px rgba(128,145,195,0.850);overflow:visible;white-space:nowrap;font-family:'Liberation Sans',sans-serif;font-weight:bold;font-size:17px;line-height:30px;letter-spacing:3.050px;color:rgba(128,145,195,0.850);transform:scaleY(1.950);transform-origin:0 50%;text-shadow:0 0.500px 0 rgba(255,255,255,0.500)">xtremehardware.com</div>



</body>
</html>
